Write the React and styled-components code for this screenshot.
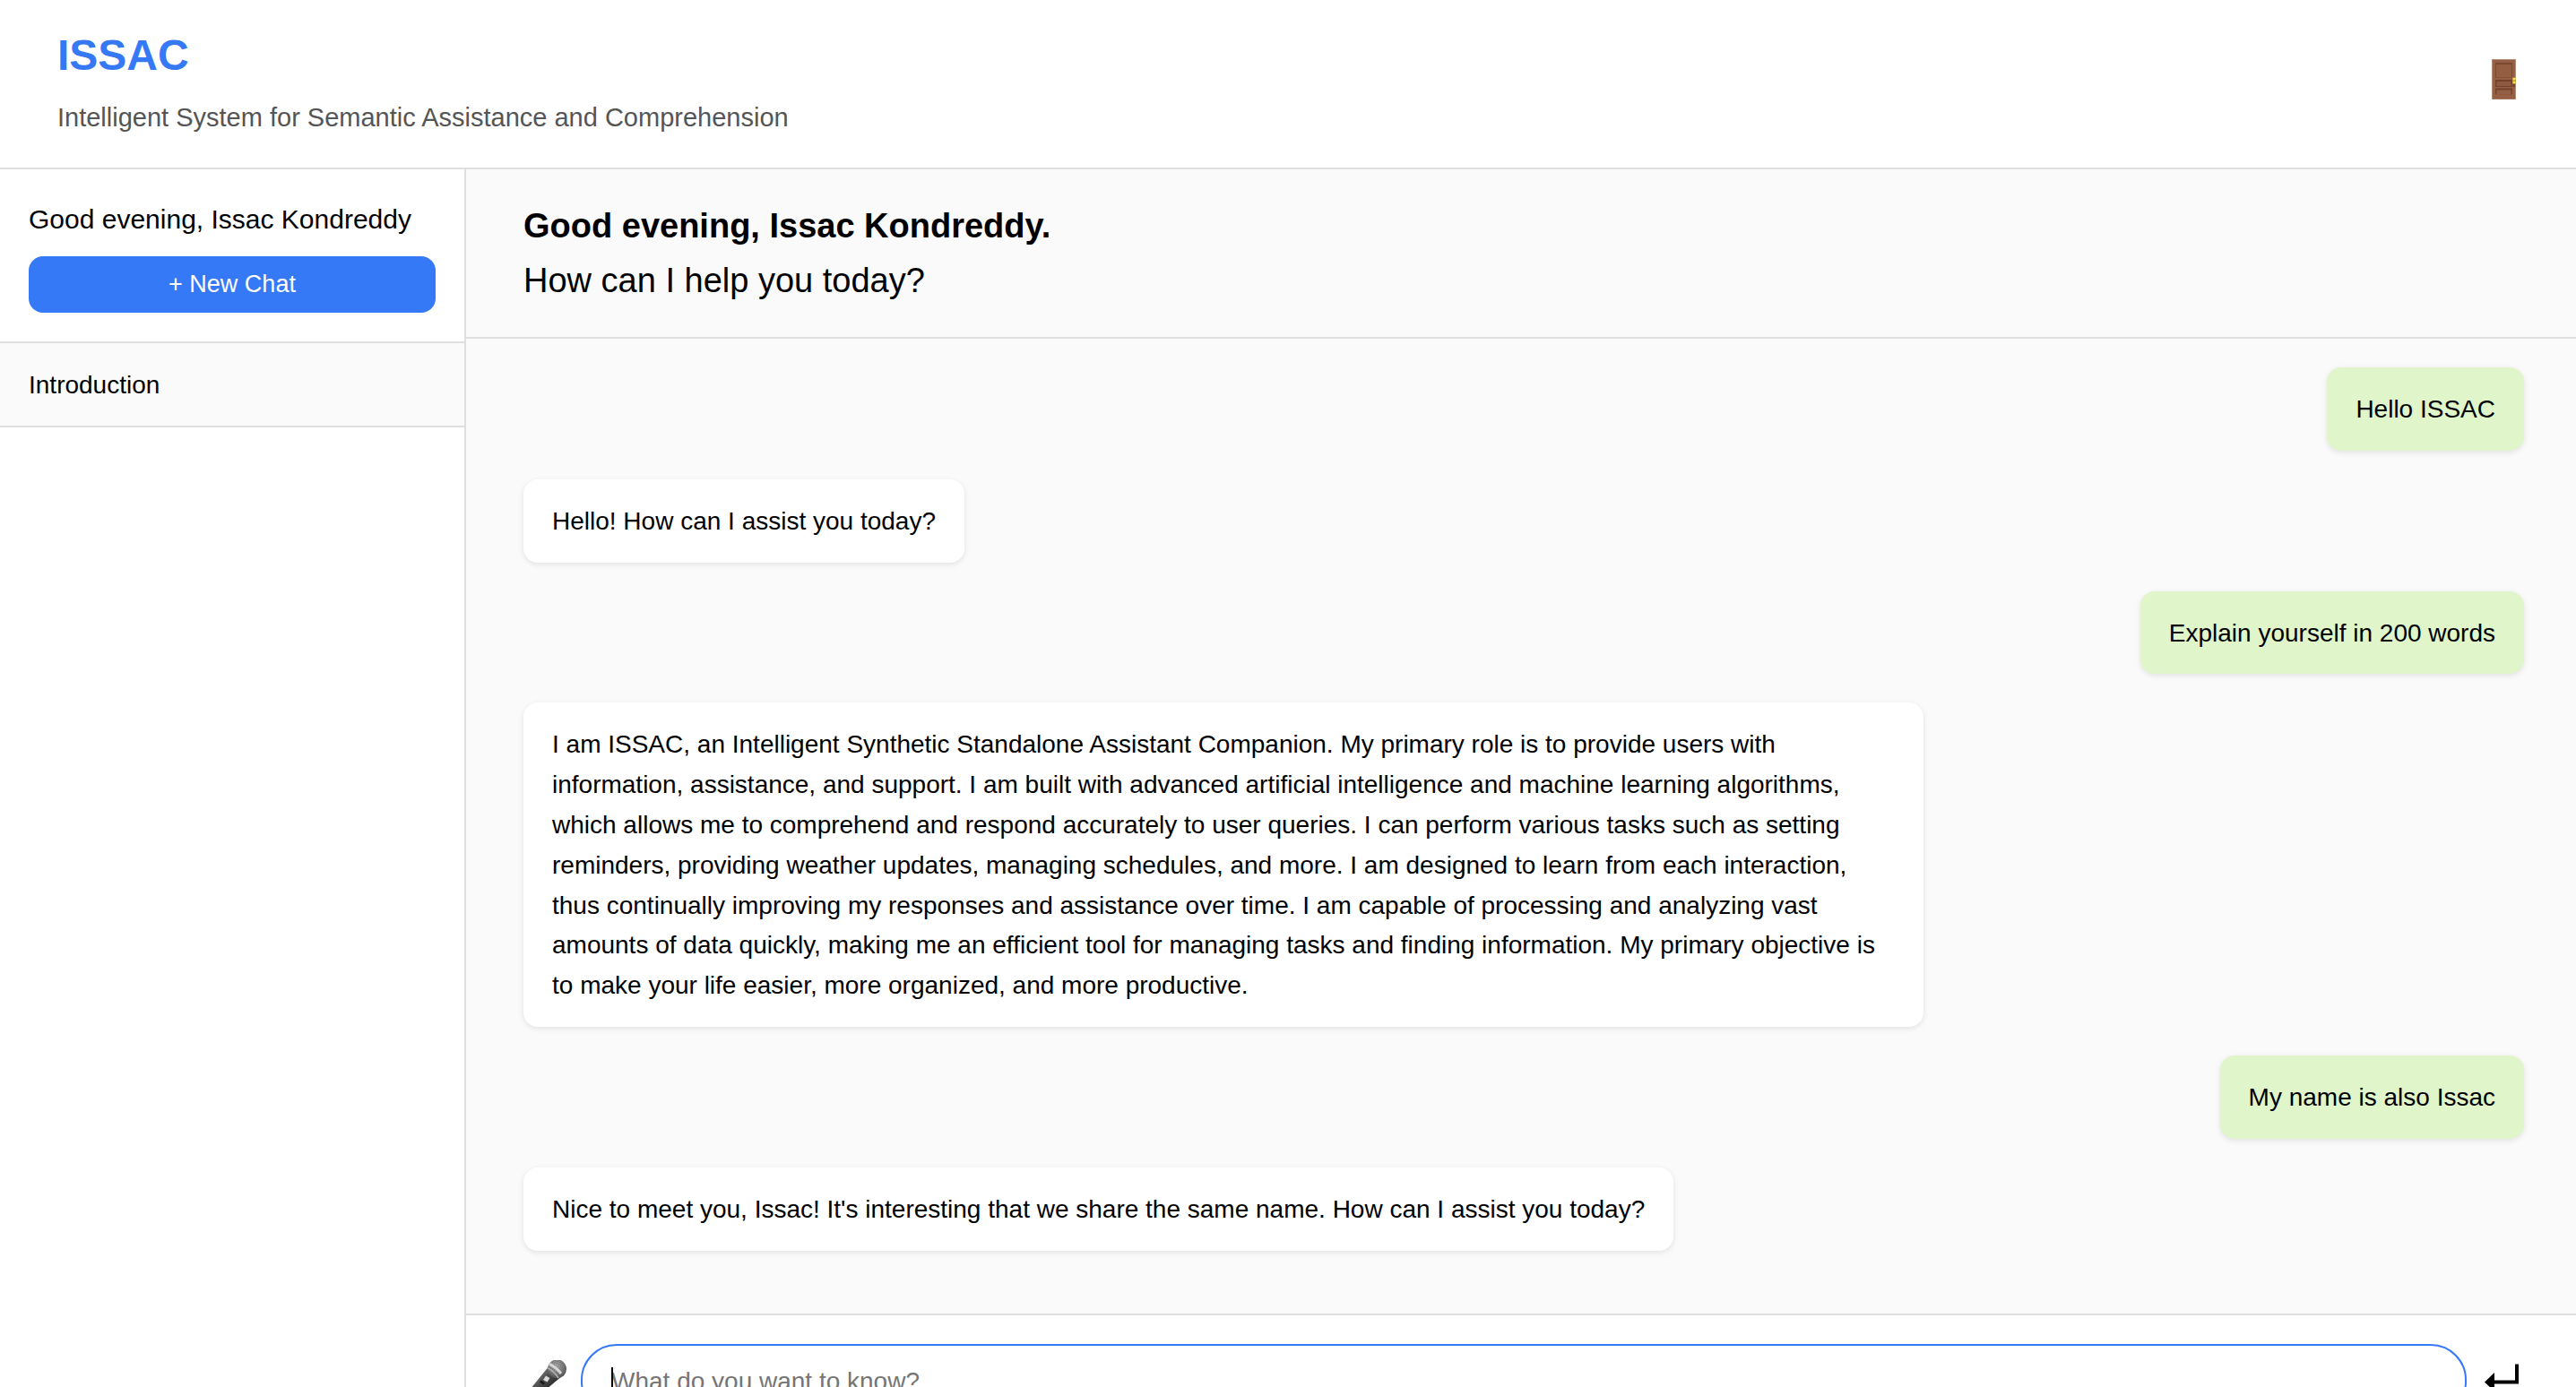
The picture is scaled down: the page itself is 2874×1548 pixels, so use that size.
import React from "react";
import styled, { createGlobalStyle } from "styled-components";

const color = {
  accent: "#3579f6",
  line: "#dfdfdf",
  surface: "#fafafa",
  mine: "#e1f5cb",
};

const GlobalStyle = createGlobalStyle`
  *, *::before, *::after { box-sizing: border-box; }
  html, body { margin: 0; overflow: hidden; }
  body {
    font-family: "Liberation Sans", Helvetica, Arial, sans-serif;
    font-size: 28px;
    line-height: 1.6;
    color: #000;
    background: #fff;
  }
  h1, h2, p, ul { margin: 0; padding: 0; }
  button, input { font-family: inherit; }
`;

const Page = styled.div`
  display: flex;
  flex-direction: column;
  min-height: 100vh;
`;

const TopBar = styled.header`
  display: flex;
  align-items: center;
  justify-content: space-between;
  padding: 33px 64px 32px;
  border-bottom: 2px solid ${color.line};
`;

const Brand = styled.div`
  display: flex;
  flex-direction: column;
  gap: 16px;
`;

const BrandName = styled.h1`
  font-size: 48px;
  line-height: 58px;
  color: ${color.accent};
`;

const Tagline = styled.p`
  font-size: 29px;
  line-height: 48px;
  color: #555;
`;

const IconButton = styled.button`
  display: flex;
  flex: none;
  align-items: center;
  justify-content: center;
  width: ${(p) => p.$width};
  padding: 0;
  border: 0;
  background: none;
  cursor: pointer;
`;

const Body = styled.div`
  display: flex;
  flex: 1;
`;

const Sidebar = styled.aside`
  flex: none;
  width: 520px;
  border-right: 2px solid ${color.line};
`;

const SidebarHead = styled.div`
  display: flex;
  flex-direction: column;
  gap: 18px;
  padding: 32px;
  border-bottom: 2px solid ${color.line};
`;

const UserGreeting = styled.p`
  font-size: 30px;
  line-height: 47px;
  white-space: nowrap;
`;

const NewChat = styled.button`
  padding: 16px;
  border: 0;
  border-radius: 16px;
  background: ${color.accent};
  color: #fff;
  font-size: 27px;
  line-height: 31px;
  cursor: pointer;
`;

const ChatList = styled.ul`
  list-style: none;
`;

const ChatLink = styled.a`
  display: block;
  padding: 25px 32px 23px;
  border-bottom: 2px solid ${color.line};
  background: ${color.surface};
  color: inherit;
  line-height: 44px;
  text-decoration: none;
`;

const Main = styled.main`
  flex: 1;
  min-width: 0;
  background: ${color.surface};
`;

const Welcome = styled.section`
  padding: 33px 64px 32px;
  border-bottom: 2px solid ${color.line};
  font-size: 38px;
  line-height: 61px;
`;

const WelcomeTitle = styled.h2`
  font-size: inherit;
`;

const Messages = styled.section`
  display: flex;
  flex-direction: column;
  gap: 32px;
  padding: 32px 58px 70px 64px;
`;

const Bubble = styled.p`
  align-self: ${(p) => (p.$mine ? "flex-end" : "flex-start")};
  max-width: 70%;
  padding: 25px 32px 23px;
  border-radius: 16px;
  background: ${(p) => (p.$mine ? color.mine : "#fff")};
  box-shadow: 0 2px 6px rgba(0, 0, 0, 0.1);
`;

const Composer = styled.form`
  display: flex;
  align-items: center;
  gap: 16px;
  padding: 32px 64px;
  border-top: 2px solid ${color.line};
  background: #fff;
`;

const Field = styled.label`
  position: relative;
  display: flex;
  flex: 1;
`;

const Prompt = styled.input`
  width: 100%;
  padding: 24px 32px;
  border: 2px solid ${color.accent};
  border-radius: 40px;
  outline: none;
  background: #fff;
  font-size: 28px;
  line-height: 32px;
  caret-color: transparent;

  &::placeholder {
    color: #757575;
    opacity: 1;
  }
`;

const Caret = styled.span`
  position: absolute;
  top: 26px;
  left: 34px;
  width: 2px;
  height: 32px;
  background: #000;
`;

const DoorIcon = () => (
  <svg width="27" height="56" viewBox="0 0 27 56" aria-hidden="true">
    <rect width="27" height="45" fill="#b58a74" />
    <rect x="1" y="1" width="25" height="43.5" fill="#955f43" />
    <rect x="4" y="4" width="19" height="17" fill="#7b4830" />
    <rect x="5" y="6" width="17" height="14.5" fill="#935e42" />
    <rect x="4" y="23" width="19" height="8" fill="#74422c" />
    <rect x="5.5" y="25" width="16" height="5" fill="#8f5b40" />
    <rect x="4" y="32.5" width="19" height="7" fill="#74422c" />
    <rect x="5.5" y="34.5" width="16" height="5" fill="#935e42" />
    <rect x="23" y="20.5" width="3.5" height="7" fill="#c8a81e" />
    <rect x="24" y="21" width="2.5" height="2" fill="#f6ec4c" />
    <rect x="24" y="25" width="2.5" height="2" fill="#f3e544" />
    <rect x="23.5" y="28" width="2.5" height="3" fill="#764329" />
  </svg>
);

const MicIcon = () => (
  <svg width="48" height="48" viewBox="0 0 48 48" aria-hidden="true">
    <defs>
      <linearGradient id="micBody" x1="0" y1="0" x2="1" y2="1">
        <stop offset="0.2" stopColor="#8a8a8a" />
        <stop offset="0.45" stopColor="#4c4c4c" />
        <stop offset="0.8" stopColor="#1c1c1c" />
      </linearGradient>
      <radialGradient id="micHead" cx="0.45" cy="0.35" r="0.7">
        <stop offset="0" stopColor="#b2b2b2" />
        <stop offset="0.6" stopColor="#7c7c7c" />
        <stop offset="1" stopColor="#4a4a4a" />
      </radialGradient>
      <pattern id="micMesh" width="2.4" height="2.4" patternUnits="userSpaceOnUse" patternTransform="rotate(20)">
        <path d="M0 0H2.4M0 0V2.4" stroke="#3d3d3d" strokeWidth="0.6" />
      </pattern>
    </defs>
    <path d="M27 8.500 L3 38 Q0 43 3 45 Q7 48 12 44 L41 19.500 Z" fill="url(#micBody)" />
    <circle cx="37.5" cy="9.8" r="10.5" fill="url(#micHead)" />
    <circle cx="37.5" cy="9.8" r="10.5" fill="url(#micMesh)" opacity="0.6" />
    <path d="M29 4.500 Q36 7.500 42 15" fill="none" stroke="#d6d6d6" strokeWidth="3" />
    <path d="M26.500 8.500 Q34 12 39 20" fill="none" stroke="#b0b0b0" strokeWidth="1.5" />
    <path d="M25 17.500 L29.500 20 L26.500 24.500 L22 22 Z" fill="#d9d9d9" />
    <path d="M19.500 22.500 L24 25.500 L22.500 27.500 L18 24.500 Z" fill="#161616" />
  </svg>
);

const ReturnIcon = () => (
  <svg width="42" height="48" viewBox="0 0 42 48" aria-hidden="true">
    <path d="M38 4.500H42V26.500H15V35L4 24.500L15 14V22.500H38Z" fill="#000" />
  </svg>
);

const chats = ["Introduction"];

const messages = [
  { mine: true, text: "Hello ISSAC" },
  { mine: false, text: "Hello! How can I assist you today?" },
  { mine: true, text: "Explain yourself in 200 words" },
  {
    mine: false,
    text:
      "I am ISSAC, an Intelligent Synthetic Standalone Assistant Companion. My primary role is to provide users with information, assistance, and support. I am built with advanced artificial intelligence and machine learning algorithms, which allows me to comprehend and respond accurately to user queries. I can perform various tasks such as setting reminders, providing weather updates, managing schedules, and more. I am designed to learn from each interaction, thus continually improving my responses and assistance over time. I am capable of processing and analyzing vast amounts of data quickly, making me an efficient tool for managing tasks and finding information. My primary objective is to make your life easier, more organized, and more productive.",
  },
  { mine: true, text: "My name is also Issac" },
  {
    mine: false,
    text: "Nice to meet you, Issac! It's interesting that we share the same name. How can I assist you today?",
  },
];

export default function App() {
  return (
    <>
      <GlobalStyle />
      <Page>
        <TopBar>
          <Brand>
            <BrandName>ISSAC</BrandName>
            <Tagline>Intelligent System for Semantic Assistance and Comprehension</Tagline>
          </Brand>
          <IconButton type="button" $width="33px" aria-label="Log out">
            <DoorIcon />
          </IconButton>
        </TopBar>
        <Body>
          <Sidebar>
            <SidebarHead>
              <UserGreeting>Good evening, Issac Kondreddy</UserGreeting>
              <NewChat type="button">+ New Chat</NewChat>
            </SidebarHead>
            <ChatList>
              {chats.map((title) => (
                <li key={title}>
                  <ChatLink href="#">{title}</ChatLink>
                </li>
              ))}
            </ChatList>
          </Sidebar>
          <Main>
            <Welcome>
              <WelcomeTitle>Good evening, Issac Kondreddy.</WelcomeTitle>
              <p>How can I help you today?</p>
            </Welcome>
            <Messages>
              {messages.map((m) => (
                <Bubble key={m.text} $mine={m.mine}>
                  {m.text}
                </Bubble>
              ))}
            </Messages>
            <Composer onSubmit={(e) => e.preventDefault()}>
              <IconButton type="button" $width="48px" aria-label="Speak">
                <MicIcon />
              </IconButton>
              <Field>
                <Prompt type="text" aria-label="Your question" placeholder="What do you want to know?" />
                <Caret />
              </Field>
              <IconButton type="submit" $width="42px" aria-label="Send">
                <ReturnIcon />
              </IconButton>
            </Composer>
          </Main>
        </Body>
      </Page>
    </>
  );
}
